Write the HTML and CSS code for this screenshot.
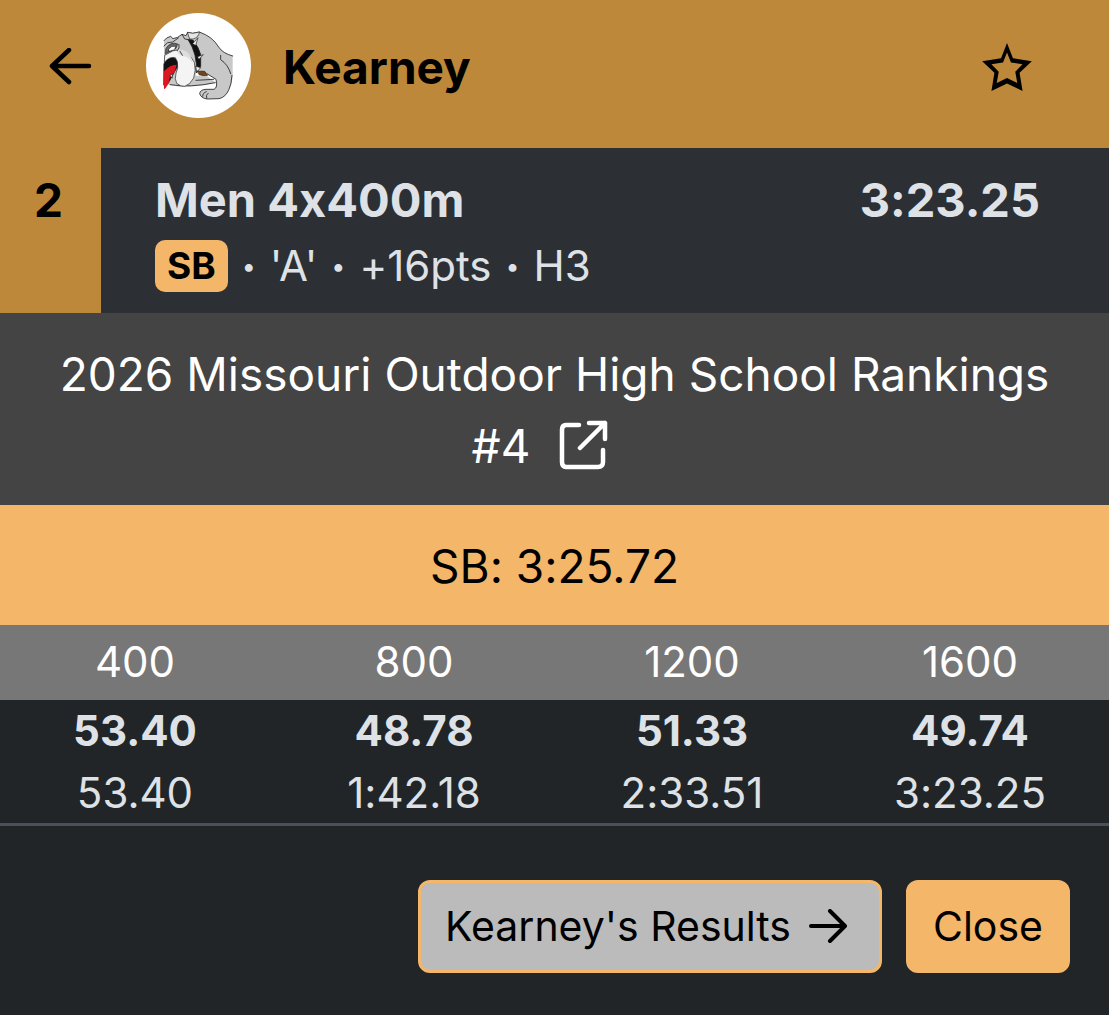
FILE: index.html
```html
<!DOCTYPE html>
<html lang="en">
  <head>
    <meta charset="utf-8">
    <meta name="viewport" content="width=device-width, initial-scale=1">
    <title>Kearney - Men 4x400m</title>
    <link rel="stylesheet" href="styles.css">
  </head>
  <body>
    <header class="team-header">
      <button class="icon-button" aria-label="Back">
        <svg width="44" height="38" viewBox="0 0 44 38" fill="none" stroke="currentColor" stroke-width="4.500" stroke-linecap="round" stroke-linejoin="round">
          <path d="M41 18H4M21 2L4 18l17 16" />
        </svg>
      </button>
      <svg class="team-logo" viewBox="18 24 315 315" role="img" aria-label="Kearney Bulldogs">
        <circle cx="175.500" cy="181.500" r="157.500" fill="#fff" />
        <g stroke="#222" stroke-width="2.500" stroke-linejoin="round" stroke-linecap="round">
          <path fill="#c8c8c8" stroke="none" d="M72 107L80 99L92 94L99 101L113 97L126 88L138 92L143 82L158 85L178 81Q218 95 236 126Q248 145 278 153V208Q278 234 267 253Q257 277 237 281L202 282Q183 280 179 266Q180 254 198 253L222 253Q234 248 228 223L201 206L170 192L165 225L226 234Q132 252 92 241L72 234Z" />
          <path fill="#c8c8c8" stroke="none" d="M150 212L200 212L226 232L140 243Z" />
          <path fill="none" d="M72 107L80 99L92 94L99 101L113 97L126 88L138 92L143 82L158 85L178 81Q218 95 236 126Q248 145 278 153M276 211Q274 240 267 253Q257 277 237 281L202 282Q183 280 179 266Q180 254 198 253L222 253Q234 248 228 223L201 206M90 239Q150 249 226 233M168 226L221 223" />
          <path fill="#111" d="M72 176Q80 160 96 156L112 164L114 182L96 214L84 236L72 240Z" />
          <path fill="#dd1620" stroke="none" d="M72 199Q88 180 110 179L104 200L89 220Q85 245 72 253Z" />
          <path fill="#f4f4f4" stroke-width="2" d="M112 136Q120 151 138 146Q155 153 163 172Q169 196 161 219Q150 240 134 244Q122 245 110 235Q103 222 108 205Q116 190 112 170L106 158Q88 154 73 172L74 151L98 138Z" />
          <path fill="#ddd" stroke="none" d="M112 134Q140 132 153 155L158 178Q147 153 130 154L115 147Z" />
          <path fill="#666" stroke-width="2" d="M78 130Q92 108 113 117L108 130L77 146Z" />
          <path fill="#fff" stroke-width="2" d="M86 132Q95 120 107 124L104 134L88 139Z" />
          <path fill="none" d="M72 123L83 113L98 111L115 99M126 88L134 102L147 104L161 107M117 118Q120 130 112 137M120 139L127 151" />
          <path fill="#e6e6e6" stroke-width="2" d="M143 82L158 85L178 81Q177 96 160 102L150 102Z" />
          <path fill="#111" d="M145 105L157 105Q176 124 182 149L182 184L169 203Q173 147 145 105Z" />
          <path fill="#eee" stroke-width="2" d="M158 116L174 98L167 121ZM173 155L190 149L177 163ZM168 184L182 188L170 202ZM90 211L98 207L97 218Z" />
          <path fill="#71451f" stroke-width="2" d="M172 198L194 199L203 211L190 212L178 209Z" />
          <path fill="none" d="M242 151L242 164Q264 178 272 206M188 274Q188 263 199 260M200 280Q196 270 204 265" />
        </g>
      </svg>
      <h1>Kearney</h1>
      <button class="icon-button" aria-label="Add to favorites">
        <svg width="50" height="48" viewBox="66 68 150 145" fill="currentColor">
          <path fill-rule="evenodd" d="M141 68L159 114L216 123L179 158L188 213L141 190L94 213L103 158L66 123L123 114ZM141 97L129 127L94 132L116 155L110 189L141 174L172 189L166 155L188 132L153 127Z" />
        </svg>
      </button>
    </header>

    <main>
      <section class="result">
        <div class="place">2</div>
        <div class="result-info">
          <div class="result-title">
            <h2>Men 4x400m</h2>
            <strong>3:23.25</strong>
          </div>
          <div class="result-details">
            <span class="badge">SB</span>
            <span class="dot">•</span>
            <span>'A'</span>
            <span class="dot">•</span>
            <span>+16pts</span>
            <span class="dot">•</span>
            <span>H3</span>
          </div>
        </div>
      </section>

      <a class="rankings" href="#">
        2026 Missouri Outdoor High School Rankings<br>
        #4
        <svg width="50" height="50" viewBox="0 0 50 50" fill="none" stroke="currentColor" stroke-width="4.500" stroke-linecap="round" stroke-linejoin="round">
          <path d="M20 5H7Q3 5 3 10V42Q3 47 7 47H39Q44 47 44 42V30M21 28L46 3M30 3H46V19" />
        </svg>
      </a>

      <div class="season-best">SB: 3:25.72</div>

      <table class="splits">
        <thead>
          <tr>
            <th>400</th>
            <th>800</th>
            <th>1200</th>
            <th>1600</th>
          </tr>
        </thead>
        <tbody>
          <tr class="split">
            <td>53.40</td>
            <td>48.78</td>
            <td>51.33</td>
            <td>49.74</td>
          </tr>
          <tr>
            <td>53.40</td>
            <td>1:42.18</td>
            <td>2:33.51</td>
            <td>3:23.25</td>
          </tr>
        </tbody>
      </table>
    </main>

    <footer class="actions">
      <button class="button button-results">
        Kearney's Results
        <svg width="38" height="34" viewBox="0 0 38 34" fill="none" stroke="currentColor" stroke-width="4" stroke-linecap="round" stroke-linejoin="round">
          <path d="M2 17H35M21 2L36 17L21 32" />
        </svg>
      </button>
      <button class="button">Close</button>
    </footer>
  </body>
</html>
```
FILE: styles.css
```css
* {
  box-sizing: border-box;
}
body {
  margin: 0;
  background: #212528;
  color: #dee2e6;
  font-family: Inter, "Liberation Sans", sans-serif;
  font-size: 42px;
  font-feature-settings: "calt" 0;
  line-height: 60px;
}
h1,
h2 {
  margin: 0;
  font-size: 46px;
  font-weight: 700;
}
svg {
  display: block;
  flex: none;
}
button {
  font: inherit;
  color: #000;
  cursor: pointer;
}
.team-header {
  display: flex;
  align-items: center;
  height: 148px;
  padding: 0 77px 14px 48px;
  background: #be883b;
  color: #000;
}
.team-header h1 {
  flex: 1;
}
.icon-button {
  padding: 0;
  border: none;
  background: none;
}
.team-logo {
  width: 105px;
  margin: 0 32px 3px 54px;
}
.result {
  display: flex;
  background: #2c2f34;
}
.place {
  width: 101px;
  padding: 22px 4px 22px 0;
  background: #be883b;
  color: #000;
  font-size: 46px;
  font-weight: 700;
  text-align: center;
}
.result-info {
  flex: 1;
  padding: 22px 69px 21px 54px;
}
.result-title {
  display: flex;
  justify-content: space-between;
  font-size: 47px;
}
.result-title h2 {
  font-size: 47px;
}
.result-details {
  display: flex;
  align-items: center;
  gap: 14px;
  margin-top: 10px;
  line-height: 52px;
}
.badge {
  padding: 0 12px;
  border-radius: 10px;
  background: #f4b669;
  color: #000;
  font-size: 37px;
  font-weight: 700;
}
.dot {
  font-size: 25px;
}
.rankings {
  display: block;
  padding: 25px 24px 23px;
  background: #444;
  color: #fff;
  font-size: 46px;
  line-height: 72px;
  text-align: center;
  text-decoration: none;
}
.rankings svg {
  display: inline-block;
  margin: 0 28px 0 16px;
  vertical-align: -7px;
}
.season-best {
  padding: 25px 24px 23px;
  background: #f4b669;
  color: #000;
  font-size: 46px;
  line-height: 72px;
  text-align: center;
}
.splits {
  width: 100%;
  border-bottom: 3px solid #495057;
  border-spacing: 0;
  table-layout: fixed;
  text-align: center;
}
.splits th,
.splits td {
  padding: 1px 0;
}
.splits th {
  padding: 7px 0 8px;
  background: #777;
  color: #fff;
  font-weight: 400;
}
.splits th:first-child {
  width: 275px;
}
.splits th:first-child,
.splits td:first-child {
  padding-right: 5px;
}
.splits tr:last-child td {
  padding-bottom: 0;
}
.splits .split {
  font-weight: 700;
}
.actions {
  display: flex;
  justify-content: flex-end;
  gap: 24px;
  padding: 54px 39px 42px;
}
.button {
  display: flex;
  align-items: center;
  gap: 18px;
  padding: 13px 24px 14px;
  border: 3px solid #f4b669;
  border-radius: 12px;
  background: #f4b669;
  font-size: 41px;
}
.button-results {
  padding-right: 32px;
  background: #bbb;
}
```
